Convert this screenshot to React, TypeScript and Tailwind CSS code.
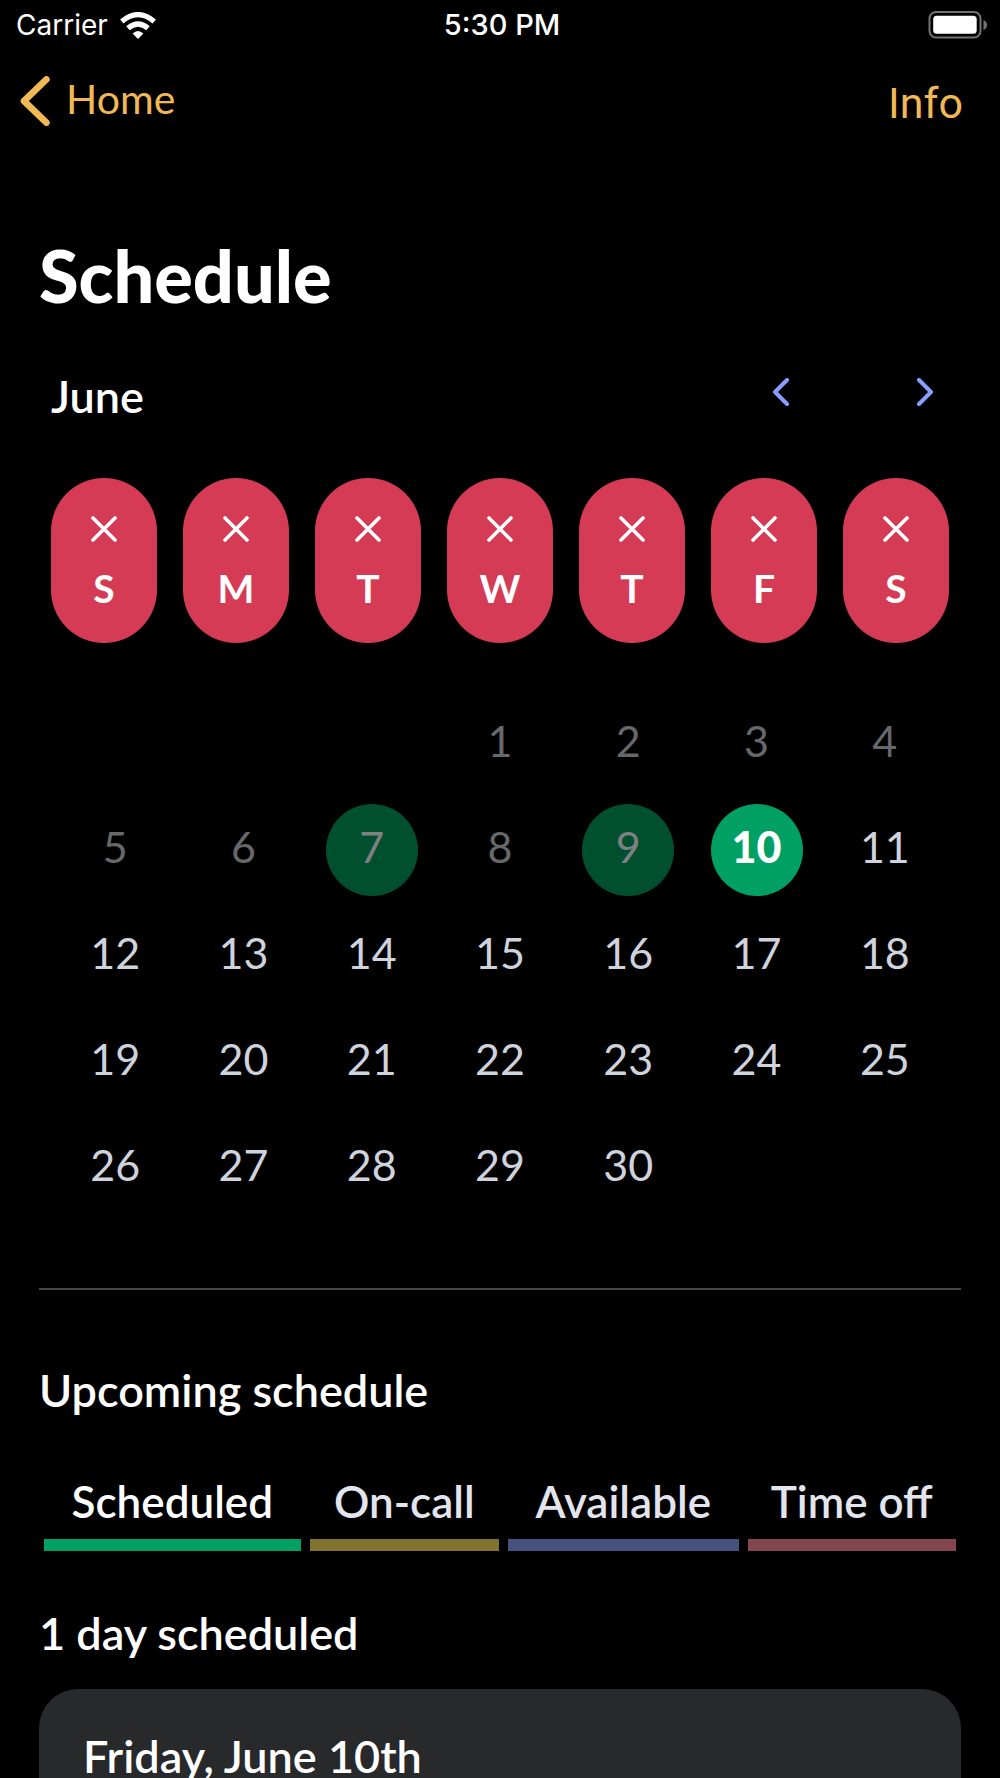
import { useState } from "react";
import clsx from "clsx";

const WEEKDAYS = [
  { short: "S", name: "Sunday" },
  { short: "M", name: "Monday" },
  { short: "T", name: "Tuesday" },
  { short: "W", name: "Wednesday" },
  { short: "T", name: "Thursday" },
  { short: "F", name: "Friday" },
  { short: "S", name: "Saturday" },
];

const TABS = [
  { label: "Scheduled", bar: "bg-[#00a064]" },
  { label: "On-call", bar: "bg-[#80732f]" },
  { label: "Available", bar: "bg-[#48527f]" },
  { label: "Time off", bar: "bg-[#84464d]" },
];

const TODAY = 10;
const FIRST_WEEKDAY = 3;
const DAYS_IN_MONTH = 30;
const WORKED = [7, 9];

function StatusBar() {
  return (
    <div className="grid h-[50px] grid-cols-3 items-center pl-4 pr-3 font-['Inter',sans-serif] text-[28px] leading-9">
      <div className="flex items-center gap-3">
        <span>Carrier</span>
        <svg viewBox="0 0 36 27" className="h-[27px] w-9" fill="none" aria-hidden="true">
          <path d="M18 27 L12.6 21.4 Q18 16.4 23.4 21.4 Z" fill="currentColor" />
          <path d="M8 16.3 Q18 7.7 28 16.3" stroke="currentColor" strokeWidth="5.2" />
          <path d="M1.8 9.4 Q18 -4.2 34.2 9.4" stroke="currentColor" strokeWidth="5.2" />
        </svg>
      </div>
      <span className="text-center text-[29px] font-medium">5:30 PM</span>
      <svg viewBox="0 0 60 28" className="h-7 w-[60px] justify-self-end" fill="none" aria-hidden="true">
        <rect x="1.500" y="1" width="51" height="25.5" rx="6.5" stroke="#737373" strokeWidth="2" />
        <rect x="5.200" y="4.800" width="43.5" height="18" rx="3.5" fill="#fff" />
        <path d="M55.5 9 Q59 10.5 59 14 Q59 17.5 55.5 19 Z" fill="#737373" />
      </svg>
    </div>
  );
}

function NavBar() {
  return (
    <nav className="flex h-[102px] items-center justify-between pl-5 pr-[37px] text-[#f0b955]">
      <a href="#home" className="flex items-center gap-4">
        <svg viewBox="0 0 30 50" className="h-[50px] w-[30px]" fill="none" aria-hidden="true">
          <path
            d="M26.400 3.400 L4 25 L26.400 46.600"
            stroke="currentColor"
            strokeWidth="6.6"
            strokeLinecap="round"
            strokeLinejoin="round"
          />
        </svg>
        <span className="pb-1 text-[41px] leading-12">Home</span>
      </a>
      <a href="#info" className="pt-1 font-['Roboto',sans-serif] text-[43px] leading-12">
        Info
      </a>
    </nav>
  );
}

function Chevron({ d }: { d: string }) {
  return (
    <svg viewBox="0 0 16 28" className="h-7 w-4" fill="none" aria-hidden="true">
      <path d={d} stroke="currentColor" strokeWidth="4" strokeLinecap="round" strokeLinejoin="round" />
    </svg>
  );
}

function Day({ day }: { day: number }) {
  const worked = WORKED.includes(day);
  return (
    <button
      type="button"
      className={clsx(
        "flex size-[92px] items-center justify-center justify-self-center rounded-full pb-[6px] text-[43px] leading-14",
        day === TODAY && "bg-[#00a064] font-black text-white",
        worked && "bg-[#005030] text-[#808080]",
        day < TODAY && !worked && "text-[#66686c]",
        day > TODAY && "text-[#ced3dd]"
      )}
    >
      {day}
    </button>
  );
}

export default function App() {
  const [tab, setTab] = useState("Scheduled");

  const blanks = Array.from({ length: FIRST_WEEKDAY });
  const days = Array.from({ length: DAYS_IN_MONTH }, (_, i) => i + 1);

  return (
    <div className="h-screen overflow-hidden bg-black font-['Lato',sans-serif] text-white">
      <StatusBar />
      <NavBar />

      <main className="px-[39px]">
        <h1 className="mt-[83px] text-[72px] font-black leading-20">Schedule</h1>

        <section className="px-3">
          <div className="mt-[53px] flex items-start justify-between">
            <h2 className="text-[45px] font-semibold leading-14">June</h2>
            <div className="flex gap-24 text-[#879fff]">
              <button type="button" aria-label="Previous month" className="flex size-12 items-center justify-center">
                <Chevron d="M14 2 L2 14 L14 26" />
              </button>
              <button type="button" aria-label="Next month" className="flex size-12 items-center justify-center">
                <Chevron d="M2 2 L14 14 L2 26" />
              </button>
            </div>
          </div>

          <div className="mt-[54px] grid grid-cols-7 gap-[26px]">
            {WEEKDAYS.map((d) => (
              <button
                key={d.name}
                type="button"
                aria-label={d.name}
                className="flex h-[165px] flex-col items-center gap-[22px] rounded-full bg-[#d53b55] pt-[38px]"
              >
                <svg viewBox="0 0 26 26" className="size-[26px]" fill="none" aria-hidden="true">
                  <path d="M2 2 L24 24 M24 2 L2 24" stroke="currentColor" strokeWidth="3.6" strokeLinecap="round" />
                </svg>
                <span className="text-[39px] font-bold leading-12">{d.short}</span>
              </button>
            ))}
          </div>

          <div className="mt-[55px] grid grid-cols-7 gap-y-[14px]">
            {blanks.map((_, i) => (
              <span key={i} />
            ))}
            {days.map((day) => (
              <Day key={day} day={day} />
            ))}
          </div>
        </section>

        <hr className="mt-[74px] border-t-2 border-[#45474f]" />

        <section>
          <h2 className="mt-[72px] text-[45px] font-semibold leading-14">Upcoming schedule</h2>

          <div
            role="tablist"
            className="mt-[55px] grid grid-cols-[256fr_189fr_230fr_208fr] gap-[9px] px-[5px]"
          >
            {TABS.map((t) => (
              <button
                key={t.label}
                type="button"
                role="tab"
                aria-selected={tab === t.label}
                onClick={() => setTab(t.label)}
                className={clsx("text-[44px] font-semibold leading-14", tab !== t.label && "text-[#e2e5ee]")}
              >
                {t.label}
                <span className={clsx("mt-[10px] block h-3", t.bar)} />
              </button>
            ))}
          </div>

          <p className="mt-[54px] text-[45px] font-semibold leading-14">1 day scheduled</p>

          <article className="mt-7 rounded-[39px] bg-[#28292b] px-11 py-[39px]">
            <h3 className="text-[45px] font-semibold leading-14">Friday, June 10th</h3>
          </article>
        </section>
      </main>
    </div>
  );
}
